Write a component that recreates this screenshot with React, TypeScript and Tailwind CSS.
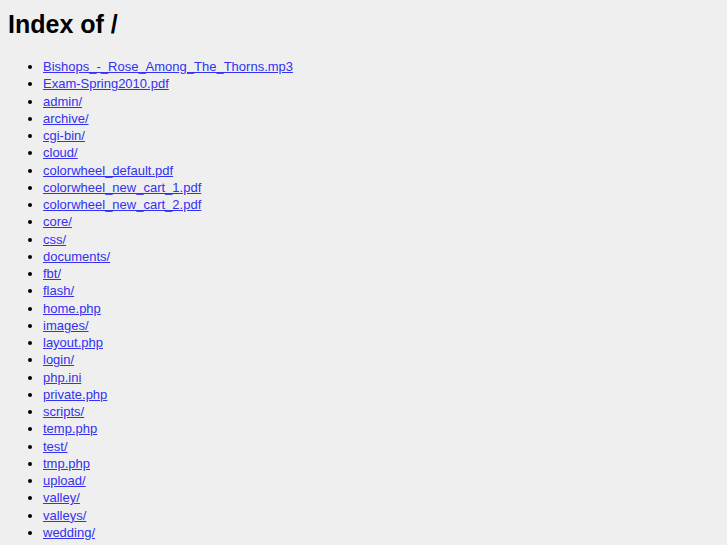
const items = [
  "Bishops_-_Rose_Among_The_Thorns.mp3",
  "Exam-Spring2010.pdf",
  "admin/",
  "archive/",
  "cgi-bin/",
  "cloud/",
  "colorwheel_default.pdf",
  "colorwheel_new_cart_1.pdf",
  "colorwheel_new_cart_2.pdf",
  "core/",
  "css/",
  "documents/",
  "fbt/",
  "flash/",
  "home.php",
  "images/",
  "layout.php",
  "login/",
  "php.ini",
  "private.php",
  "scripts/",
  "temp.php",
  "test/",
  "tmp.php",
  "upload/",
  "valley/",
  "valleys/",
  "wedding/",
];

export default function App() {
  return (
    <div className="min-h-screen bg-[#efefef] px-2 py-[7px] font-['Liberation_Sans',Arial,sans-serif] text-black">
      <h1 className="text-[25px] font-bold leading-[34px]">Index of /</h1>
      <ul className="mt-[17px] list-disc pl-[35px] text-[13px] leading-[17.25px] marker:text-black">
        {items.map((it) => (
          <li key={it}>
            <a href="#" className="text-[#3232f0] underline">
              {it}
            </a>
          </li>
        ))}
      </ul>
    </div>
  );
}
